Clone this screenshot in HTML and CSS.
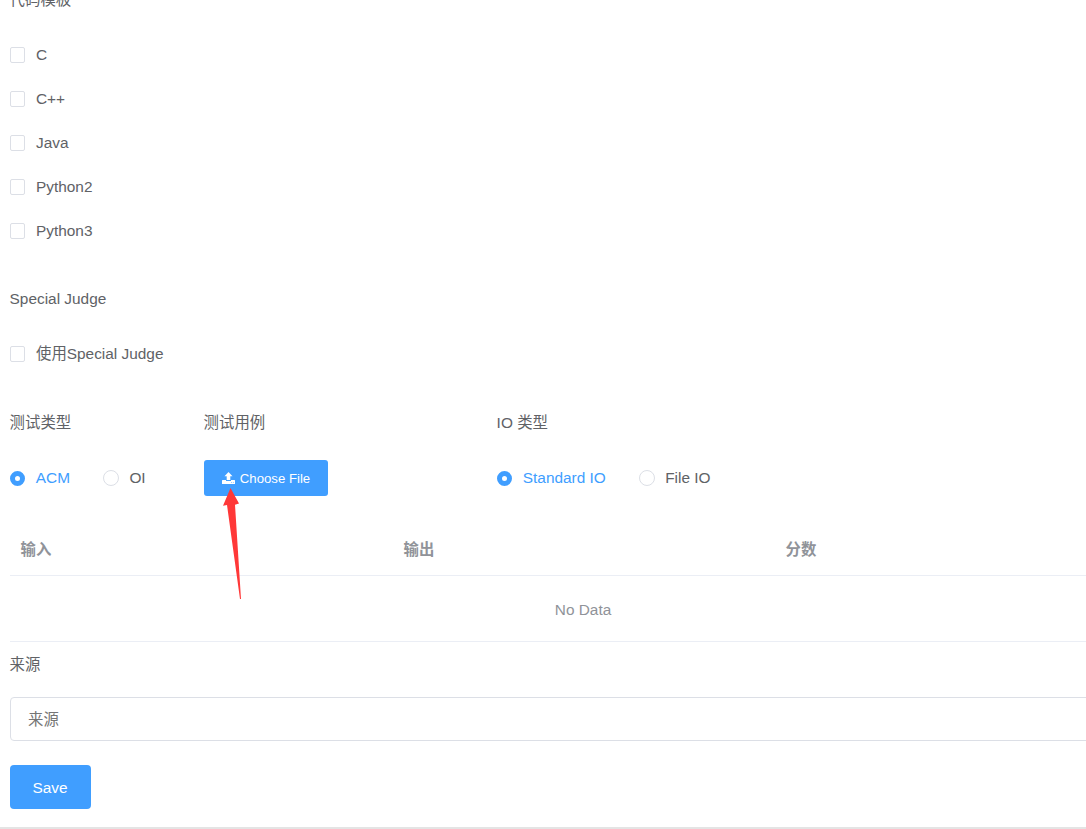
FILE: index.html
```html
<!DOCTYPE html>
<html lang="zh">
  <head>
    <meta charset="utf-8">
    <title>Problem</title>
    <link rel="stylesheet" href="styles.css">
  </head>
  <body>
    <form class="panel">
      <div class="form-item">
        <div class="label">代码模板</div>
        <div class="content">
          <div class="row"><label class="check"><span class="box"></span>C</label></div>
          <div class="row"><label class="check"><span class="box"></span>C++</label></div>
          <div class="row"><label class="check"><span class="box"></span>Java</label></div>
          <div class="row"><label class="check"><span class="box"></span>Python2</label></div>
          <div class="row"><label class="check"><span class="box"></span>Python3</label></div>
        </div>
      </div>

      <div class="form-item">
        <div class="label">Special Judge</div>
        <div class="content">
          <div class="row"><label class="check"><span class="box"></span>使用Special Judge</label></div>
        </div>
      </div>

      <div class="columns">
        <div class="form-item">
          <div class="label">测试类型</div>
          <div class="content row">
            <label class="check active"><span class="radio on"></span>ACM</label>
            <label class="check"><span class="radio"></span>OI</label>
          </div>
        </div>
        <div class="form-item">
          <div class="label">测试用例</div>
          <div class="content upload">
            <button type="button" class="btn btn-small">
              <svg class="icon" viewBox="0 0 13 12" width="13" height="12">
                <path fill="#fff" fill-rule="evenodd" d="M6.500 0L10.500 4.300H8.300V8H4.700V4.300H2.500zM.5 8H4v1h5V8h3.500l.5.500V12H0V8.500zM9 10v.7h.7V10zM10.900 10v.7h.7V10z"/>
              </svg>Choose File</button>
            <!-- pointer to the upload button -->
            <svg class="arrow" viewBox="0 0 22 112" width="22" height="112">
              <path fill="#ff3838" d="M8.500 0L17 15.500L13 16.700L19 111H18L5 17L1 17.700z"/>
            </svg>
          </div>
        </div>
        <div class="form-item">
          <div class="label">IO 类型</div>
          <div class="content row">
            <label class="check active"><span class="radio on"></span>Standard IO</label>
            <label class="check"><span class="radio"></span>File IO</label>
          </div>
        </div>
      </div>

      <table class="cases">
        <tr>
          <th class="col1">输入</th>
          <th class="col2">输出</th>
          <th>分数</th>
        </tr>
        <tr>
          <td colspan="3">No Data</td>
        </tr>
      </table>

      <div class="source">
        <div class="label">来源</div>
        <input type="text" class="input" placeholder="来源">
      </div>

      <button type="button" class="btn save">Save</button>
    </form>
    <div class="footer"></div>
  </body>
</html>
```

FILE: styles.css
```css
* {
  box-sizing: border-box;
}

html {
  overflow: hidden;
}

body {
  display: flow-root;
  margin: 0;
  height: 829px;
  overflow: hidden;
  background: #fff;
  color: #606266;
  font-family: "Liberation Sans", Arial, "Noto Sans CJK SC", sans-serif;
  font-size: 15.4px;
}

.panel {
  width: 1166px;
  height: 849px;
  margin-top: -22px;
  padding: 0 10px;
}

.form-item {
  margin-bottom: 24px;
}

.label {
  height: 44px;
  line-height: 44px;
  margin-left: -0.4px;
  white-space: nowrap;
}

.content {
  margin-top: 11px;
}

.row {
  display: flex;
  align-items: center;
  height: 44px;
}

.check {
  display: flex;
  align-items: center;
  margin-right: 33px;
  line-height: 44px;
  white-space: nowrap;
}

.active {
  color: #409eff;
}

.box {
  width: 15px;
  height: 16px;
  margin-right: 11px;
  border: 1px solid #dcdfe6;
  border-radius: 2px;
}

.radio {
  width: 16px;
  height: 16px;
  margin-right: 10.4px;
  border: 1px solid #dcdfe6;
  border-radius: 50%;
}

.radio.on {
  width: 15px;
  height: 15px;
  margin-right: 10.8px;
  border: 5px solid #409eff;
}

.columns {
  display: grid;
  grid-template-columns: 194px 293px auto;
  margin-top: 25px;
}

.upload {
  position: relative;
  padding-top: 4px;
}

.btn {
  display: block;
  padding: 0;
  border: 0;
  border-radius: 3px;
  background: #409eff;
  color: #fff;
  font-family: inherit;
}

.btn-small {
  display: flex;
  align-items: center;
  justify-content: center;
  width: 124px;
  height: 36px;
  font-size: 13.2px;
}

.icon {
  margin-right: 5px;
}

.arrow {
  position: absolute;
  left: 18px;
  top: 32px;
}

.cases {
  width: 1146px;
  table-layout: fixed;
  border-collapse: separate;
  border-spacing: 0;
  color: #909399;
}

.cases th,
.cases td {
  padding: 0 11px;
  border-bottom: 1px solid #ebeef5;
}

.cases th {
  height: 52px;
  padding: 0 10.6px 3px;
  text-align: left;
}

.cases td {
  height: 66px;
  padding-top: 2px;
  text-align: center;
}

.col1 {
  width: 383px;
}

.col2 {
  width: 382px;
}

.source .label {
  height: 55px;
  padding-top: 1px;
}

.input {
  display: block;
  width: 100%;
  height: 44px;
  padding: 2px 17px 0;
  border: 1px solid #dcdfe6;
  border-radius: 4px;
  font-family: inherit;
  font-size: 15.4px;
}

.input::placeholder {
  color: #757575;
}

.save {
  width: 81px;
  height: 44px;
  margin-top: 24px;
  padding: 2px 1px 0 0;
  border-radius: 4px;
  font-size: 15.4px;
}

.footer {
  height: 2px;
  background: #e4e4e4;
}
```
